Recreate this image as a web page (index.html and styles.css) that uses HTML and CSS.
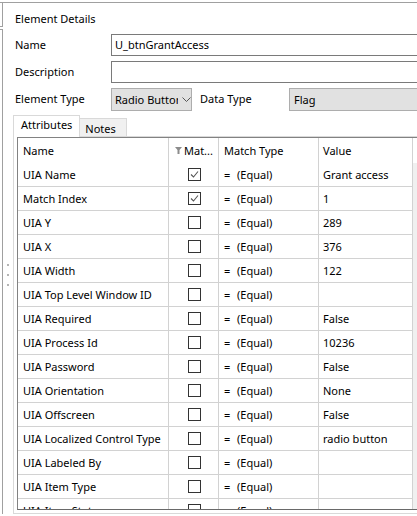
FILE: index.html
```html
<!DOCTYPE html>
<html>
<head>
<meta charset="utf-8">
<link rel="stylesheet" href="styles.css">
</head>
<body>
<div class="window">
  <div class="strip">
    <div class="strip-top"></div>
    <div class="strip-body"></div>
  </div>
  <div class="splitter">
    <span class="dot"></span><span class="dot"></span><span class="dot"></span>
  </div>
  <div class="content">
    <div class="title">Element Details</div>
    <div class="form">
      <div class="frow">
        <div class="label">Name</div>
        <div class="input">U_btnGrantAccess</div>
      </div>
      <div class="frow">
        <div class="label">Description</div>
        <div class="input"></div>
      </div>
      <div class="frow">
        <div class="label">Element Type</div>
        <div class="select short">
          <span class="sel-text">Radio Button</span>
          <svg class="chev" width="9" height="5" viewBox="0 0 9 5"><path d="M0.5 0.5 L4.5 4.5 L8.5 0.5" fill="none" stroke="#555" stroke-width="1"/></svg>
        </div>
        <div class="label dt">Data Type</div>
        <div class="select long"><span class="sel-text">Flag</span></div>
      </div>
    </div>
    <div class="tabs">
      <div class="tab active">Attributes</div>
      <div class="tab">Notes</div>
    </div>
    <div class="panel">
      <div class="grid">
        <div class="gr hdr">
          <div class="c c-name">Name</div>
          <div class="c c-match"><svg class="funnel" width="7" height="7" viewBox="0 0 7 7"><path d="M0 0 H7 L4.5 3 V7 H2.5 V3 Z" fill="#8c8c8c"/></svg>Mat...</div>
          <div class="c c-type">Match Type</div>
          <div class="c c-val">Value</div>
          <div class="c c-sb hsb"></div>
        </div>
        <div class="gr"><div class="c c-name">UIA Name</div><div class="c c-match"><span class="cb on"><svg width="11" height="11" viewBox="0 0 11 11"><path d="M2 5.5 L4.5 8 L9 2.5" fill="none" stroke="#555" stroke-width="1.1"/></svg></span></div><div class="c c-type"><span class="eq">=</span>(Equal)</div><div class="c c-val">Grant access</div><div class="c c-sb"></div></div>
        <div class="gr"><div class="c c-name">Match Index</div><div class="c c-match"><span class="cb on"><svg width="11" height="11" viewBox="0 0 11 11"><path d="M2 5.5 L4.5 8 L9 2.5" fill="none" stroke="#555" stroke-width="1.1"/></svg></span></div><div class="c c-type"><span class="eq">=</span>(Equal)</div><div class="c c-val">1</div><div class="c c-sb"></div></div>
        <div class="gr"><div class="c c-name">UIA Y</div><div class="c c-match"><span class="cb"></span></div><div class="c c-type"><span class="eq">=</span>(Equal)</div><div class="c c-val">289</div><div class="c c-sb"></div></div>
        <div class="gr"><div class="c c-name">UIA X</div><div class="c c-match"><span class="cb"></span></div><div class="c c-type"><span class="eq">=</span>(Equal)</div><div class="c c-val">376</div><div class="c c-sb"></div></div>
        <div class="gr"><div class="c c-name">UIA Width</div><div class="c c-match"><span class="cb"></span></div><div class="c c-type"><span class="eq">=</span>(Equal)</div><div class="c c-val">122</div><div class="c c-sb"></div></div>
        <div class="gr"><div class="c c-name">UIA Top Level Window ID</div><div class="c c-match"><span class="cb"></span></div><div class="c c-type"><span class="eq">=</span>(Equal)</div><div class="c c-val"></div><div class="c c-sb"></div></div>
        <div class="gr"><div class="c c-name">UIA Required</div><div class="c c-match"><span class="cb"></span></div><div class="c c-type"><span class="eq">=</span>(Equal)</div><div class="c c-val">False</div><div class="c c-sb"></div></div>
        <div class="gr"><div class="c c-name">UIA Process Id</div><div class="c c-match"><span class="cb"></span></div><div class="c c-type"><span class="eq">=</span>(Equal)</div><div class="c c-val">10236</div><div class="c c-sb"></div></div>
        <div class="gr"><div class="c c-name">UIA Password</div><div class="c c-match"><span class="cb"></span></div><div class="c c-type"><span class="eq">=</span>(Equal)</div><div class="c c-val">False</div><div class="c c-sb"></div></div>
        <div class="gr"><div class="c c-name">UIA Orientation</div><div class="c c-match"><span class="cb"></span></div><div class="c c-type"><span class="eq">=</span>(Equal)</div><div class="c c-val">None</div><div class="c c-sb"></div></div>
        <div class="gr"><div class="c c-name">UIA Offscreen</div><div class="c c-match"><span class="cb"></span></div><div class="c c-type"><span class="eq">=</span>(Equal)</div><div class="c c-val">False</div><div class="c c-sb"></div></div>
        <div class="gr"><div class="c c-name">UIA Localized Control Type</div><div class="c c-match"><span class="cb"></span></div><div class="c c-type"><span class="eq">=</span>(Equal)</div><div class="c c-val">radio button</div><div class="c c-sb"></div></div>
        <div class="gr"><div class="c c-name">UIA Labeled By</div><div class="c c-match"><span class="cb"></span></div><div class="c c-type"><span class="eq">=</span>(Equal)</div><div class="c c-val"></div><div class="c c-sb"></div></div>
        <div class="gr"><div class="c c-name">UIA Item Type</div><div class="c c-match"><span class="cb"></span></div><div class="c c-type"><span class="eq">=</span>(Equal)</div><div class="c c-val"></div><div class="c c-sb"></div></div>
        <div class="gr"><div class="c c-name">UIA Item Status</div><div class="c c-match"><span class="cb"></span></div><div class="c c-type"><span class="eq">=</span>(Equal)</div><div class="c c-val"></div><div class="c c-sb"></div></div>
      </div>
    </div>
  </div>
</div>
</body>
</html>
```

FILE: styles.css
```css
html, body {
  margin: 0;
  padding: 0;
  background: #ffffff;
  overflow: hidden;
  width: 417px;
  height: 516px;
}
body {
  font-family: "Noto Sans", "Segoe UI", sans-serif;
  font-size: 11px;
  color: #000;
}
.window {
  margin-top: 2px;
  border-top: 1px solid #a0a0a0;
  display: flex;
  height: 511px;
  width: 417px;
  overflow: hidden;
}
.strip {
  width: 3px;
  flex: none;
  display: flex;
  flex-direction: column;
}
.strip-top {
  height: 23px;
  border-right: 1px solid #a0a0a0;
  border-bottom: 1px solid #a0a0a0;
}
.strip-body {
  margin-top: 2px;
  flex: 1;
  border-top: 1px solid #a0a0a0;
  border-right: 1px solid #a0a0a0;
}
.splitter {
  width: 10px;
  flex: none;
  display: flex;
  flex-direction: column;
  align-items: center;
  gap: 8px;
  padding-top: 261px;
  box-sizing: border-box;
}
.dot {
  width: 2px;
  height: 2px;
  background: #b4b4b4;
}
.content {
  flex: none;
  width: 403px;
  display: flex;
  flex-direction: column;
}
.title {
  padding: 8px 0 0 2px;
  line-height: 16px;
  height: 16px;
}
.form {
  margin-top: 7px;
  padding-left: 2px;
  display: flex;
  flex-direction: column;
  gap: 5px;
}
.frow {
  display: flex;
  align-items: center;
  height: 22px;
}
.label {
  width: 96px;
  flex: none;
  line-height: 16px;
}
.label.dt {
  width: 89px;
  margin-left: 8px;
}
.input {
  flex: none;
  width: 340px;
  height: 20px;
  border: 1px solid #7a7a7a;
  line-height: 20px;
  padding-left: 3px;
  box-sizing: content-box;
}
.select {
  flex: none;
  border: 1px solid #adadad;
  background: #e1e1e1;
  display: flex;
  align-items: center;
  box-sizing: border-box;
  height: 23px;
}
.select.short {
  width: 81px;
  padding-left: 3px;
}
.select.short .sel-text {
  width: 63px;
  overflow: hidden;
  white-space: nowrap;
}
.chev {
  margin-left: 4px;
}
.select.long {
  width: 200px;
  padding-left: 4px;
}
.tabs {
  margin-top: 5px;
  display: flex;
  align-items: flex-end;
  height: 21px;
}
.tab {
  height: 17px;
  line-height: 19px;
  padding: 0 10px 0 5px;
  border-top: 1px solid #d9d9d9;
  border-right: 1px solid #d9d9d9;
  background: #f0f0f0;
}
.tab.active {
  position: relative;
  z-index: 1;
  height: 21px;
  line-height: 18px;
  margin-bottom: -1px;
  padding: 0 7px 0 7px;
  background: #fff;
  border-left: 1px solid #d9d9d9;
}
.panel {
  border: 1px solid #d9d9d9;
  border-right: none;
  padding: 0 0 3px 3px;
  height: 373px;
  box-sizing: content-box;
  width: 420px;
}
.grid {
  border-top: 1px solid #828282;
  border-left: 1px solid #828282;
  border-bottom: 1px solid #696969;
  height: 371px;
  overflow: hidden;
}
.gr {
  display: flex;
  height: 24px;
}
.gr.hdr {
  height: 25px;
}
.c {
  flex: none;
  box-sizing: border-box;
  height: 100%;
  border-right: 1px solid #d2d2d2;
  border-bottom: 1px solid #d2d2d2;
  display: flex;
  align-items: center;
  white-space: nowrap;
  overflow: hidden;
}
.hdr .c {
  border-bottom: none;
}
.c-name { width: 151px; padding-left: 5px; }
.c-match { width: 50px; justify-content: center; }
.c-type { width: 100px; padding-left: 5px; }
.c-val { width: 94px; padding-left: 4px; }
.c-sb {
  width: 20px;
  background: #f0f0f0;
  border: none;
}
.hdr .c-sb { background: #fff; }
.hdr .c-match {
  justify-content: flex-start;
  padding-left: 6px;
}
.funnel {
  margin-right: 2px;
}
.cb {
  width: 13px;
  height: 13px;
  box-sizing: border-box;
  border: 1px solid #333;
  display: flex;
  align-items: center;
  justify-content: center;
  margin-left: 1px;
}
.eq {
  width: 13px;
}
```
